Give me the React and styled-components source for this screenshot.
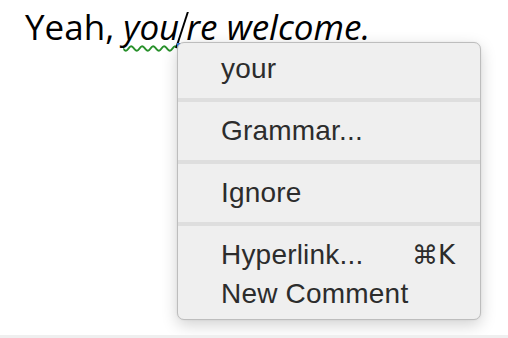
import React from "react"
import styled, { createGlobalStyle } from "styled-components"

const Global = createGlobalStyle`
  html, body {
    margin: 0;
    padding: 0;
    background: #ffffff;
  }
`

export default function App() {
  return (
    <>
      <Global />
      <Page>
        <Sentence>
          Yeah,{" "}
          <Italic>
            <Flagged>you</Flagged>
            <Caret />
            re welcome.
          </Italic>
        </Sentence>
        <Marker />
        <Menu>
          <Item>your</Item>
          <Separator />
          <Item>Grammar...</Item>
          <Separator />
          <Item>Ignore</Item>
          <Separator />
          <Item>
            Hyperlink...
            <Shortcut>⌘K</Shortcut>
          </Item>
          <Item>New Comment</Item>
        </Menu>
      </Page>
      <BottomStrip />
    </>
  )
}

const Page = styled.div`
  position: relative;
  height: 335px;
  overflow: hidden;
`

const Sentence = styled.div`
  font-family: "Open Sans", "DejaVu Sans", sans-serif;
  font-size: 35px;
  line-height: 40px;
  color: #000000;
  padding: 7px 0 0 25px;
  white-space: nowrap;
`

const Italic = styled.span`
  font-style: italic;
`

const Flagged = styled.span`
  text-decoration: underline wavy #27902a;
  text-decoration-thickness: 2px;
  text-underline-offset: 5px;
  text-decoration-skip-ink: none;
`

const Caret = styled.span`
  display: inline-block;
  width: 2px;
  height: 36px;
  margin: 0 3px 0 2px;
  background: #000000;
  vertical-align: -8px;
  transform: skewX(-18deg);
`

const Marker = styled.div`
  position: absolute;
  left: 177px;
  top: 43px;
  width: 4px;
  height: 4px;
  background: #2f7de1;
`

const Menu = styled.div`
  position: absolute;
  left: 177px;
  top: 42px;
  width: 302px;
  padding: 6px 0;
  background: #efefef;
  border: 1px solid #bdbdbd;
  border-radius: 7px;
  box-shadow: 0 5px 16px rgba(0, 0, 0, 0.18), 0 0 2px rgba(0, 0, 0, 0.08);
  font-family: "Liberation Sans", Arial, sans-serif;
  font-size: 28px;
  letter-spacing: 0.2px;
  color: #2c2c2c;
`

const Item = styled.div`
  display: flex;
  justify-content: space-between;
  align-items: baseline;
  height: 39px;
  line-height: 39px;
  padding: 0 25px 0 43px;
  white-space: nowrap;
`

const Shortcut = styled.span`
  font-family: "DejaVu Sans", "Liberation Sans", sans-serif;
  font-size: 26px;
  letter-spacing: 0;
`

const Separator = styled.div`
  height: 4px;
  margin: 10px 0 9px;
  background: #dedede;
`

const BottomStrip = styled.div`
  height: 3px;
  background: #efefef;
`
